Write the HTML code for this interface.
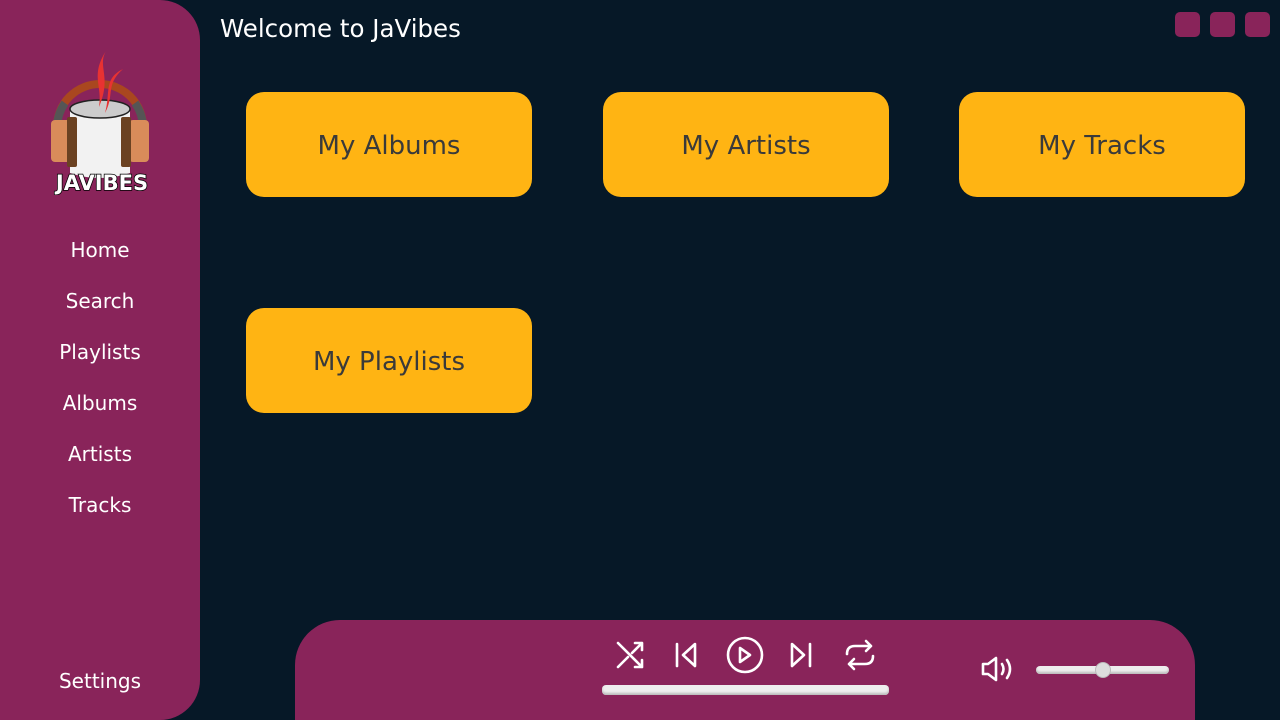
<!DOCTYPE html>
<html><head><meta charset="utf-8"><style>
*{margin:0;padding:0;box-sizing:border-box}
html,body{width:1280px;height:720px;overflow:hidden}
body{background:#061827;font-family:"DejaVu Sans","Liberation Sans",sans-serif;position:relative}
.side{position:absolute;left:0;top:0;width:200px;height:720px;background:#89245A;border-radius:0 40px 40px 0}
.nav{position:absolute;left:0;width:200px;text-align:center;color:#fff;font-size:20px}
h1{position:absolute;left:220px;top:14px;color:#fff;font-size:24.5px;font-weight:normal}
.wb{position:absolute;top:12px;width:25px;height:25px;background:#89245A;border-radius:5px}
.card{position:absolute;width:286px;height:105px;background:#FFB413;border-radius:18px;color:#3a3a3a;font-size:26px;display:flex;align-items:center;justify-content:center;padding-top:2px}
.player{position:absolute;left:295px;top:620px;width:900px;height:100px;background:#89245A;border-radius:45px 45px 0 0}
.bar{position:absolute;background:#eee;border-radius:4px;box-shadow:inset 0 -2px 2px #bbb}
</style></head><body>
<div class="side">
<svg style="position:absolute;left:45px;top:45px" width="110" height="150" viewBox="0 0 110 150">
<path d="M12 82 A43 43 0 0 1 98 82" stroke="#a9471f" stroke-width="8" fill="none"/>
<path d="M12 82 A43 43 0 0 1 20 58" stroke="#555" stroke-width="8" fill="none"/>
<path d="M98 82 A43 43 0 0 0 90 58" stroke="#555" stroke-width="8" fill="none"/>
<path d="M25 64 L25 128 Q55 138 85 128 L85 64 Q55 76 25 64Z" fill="#f2f2f2"/>
<ellipse cx="55" cy="64" rx="30" ry="9" fill="#ccc" stroke="#222" stroke-width="1.5"/>
<path d="M63 3 C50 20 68 30 54 62 C58 40 44 30 63 3Z" fill="#e83232"/>
<path d="M78 24 C58 34 66 48 60 68 C70 50 60 40 78 24Z" fill="#e83232"/>
<path d="M85 78 Q106 82 100 102 L85 104" fill="#eee" stroke="#222" stroke-width="2"/>
<rect x="6" y="75" width="20" height="42" rx="4" fill="#d98c5a"/>
<rect x="22" y="72" width="10" height="50" rx="2" fill="#6b4222"/>
<rect x="84" y="75" width="20" height="42" rx="4" fill="#d98c5a"/>
<rect x="76" y="72" width="10" height="50" rx="2" fill="#6b4222"/>
<text x="57" y="145" text-anchor="middle" font-family="DejaVu Sans" font-weight="bold" font-size="21" fill="#fff" stroke="#000" stroke-width="1.5" paint-order="stroke">JAVIBES</text>
</svg>
<div class="nav" style="top:238px">Home</div>
<div class="nav" style="top:289px">Search</div>
<div class="nav" style="top:340px">Playlists</div>
<div class="nav" style="top:391px">Albums</div>
<div class="nav" style="top:442px">Artists</div>
<div class="nav" style="top:493px">Tracks</div>
<div class="nav" style="top:669px">Settings</div>
</div>
<h1>Welcome to JaVibes</h1>
<div class="wb" style="left:1175px"></div><div class="wb" style="left:1210px"></div><div class="wb" style="left:1245px"></div>
<div class="card" style="left:246px;top:92px">My Albums</div>
<div class="card" style="left:603px;top:92px">My Artists</div>
<div class="card" style="left:959px;top:92px">My Tracks</div>
<div class="card" style="left:246px;top:308px">My Playlists</div>
<div class="player">
<svg style="position:absolute;left:0;top:0" width="900" height="100" fill="none" stroke="#fff" stroke-width="2.6" stroke-linecap="round" stroke-linejoin="round">
<path d="M323 23 L347 47 M340 47 L347 47 L347 40 M323 47 L333 37 M337 33 L347 23 M340 23 L347 23 L347 30"/>
<path d="M382 24 L382 46 M400 24 L388 35 L400 46 Z"/>
<circle cx="450" cy="35" r="17"/><path d="M445 28 L445 42 L455 35 Z"/>
<path d="M497 24 L509 35 L497 46 Z M515 24 L515 46"/>
<path d="M552 34 Q552 26 560 26 L576 26 M571 21 L576 26 L571 31 M578 36 Q578 44 570 44 L554 44 M559 39 L554 44 L559 49"/>
<path d="M688 44 L693 44 L701 38 L701 60 L693 54 L688 54 Z M707 44 Q710 49 707 54 M712 40 Q718 49 712 58"/>
</svg>
<div class="bar" style="left:307px;top:65px;width:287px;height:10px"></div>
<div class="bar" style="left:741px;top:46px;width:133px;height:8px"></div>
<div style="position:absolute;left:800px;top:42px;width:16px;height:16px;border-radius:50%;background:#ddd;border:1px solid #bbb"></div>
</div>
</body></html>
